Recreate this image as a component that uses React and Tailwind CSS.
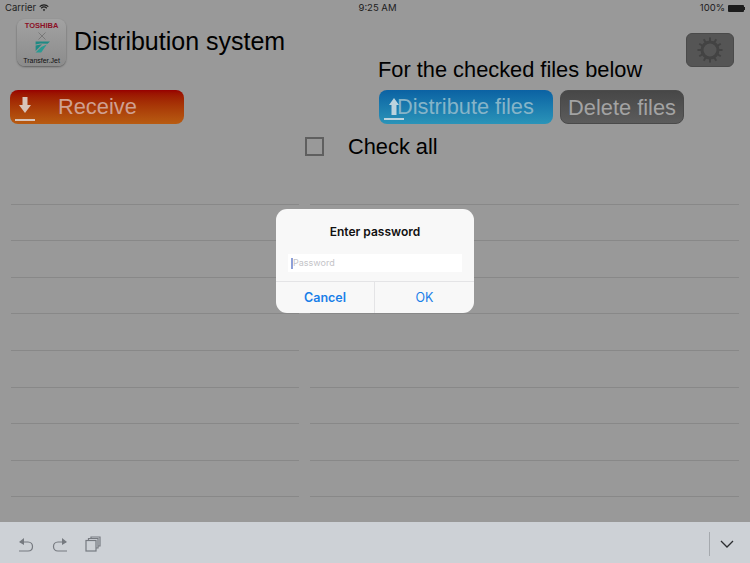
import React from 'react';

const sans = "font-['Liberation_Sans',Arial,sans-serif]";
const ui = "font-['Inter','Liberation_Sans',sans-serif]";
const rows = [0, 1, 2, 3, 4, 5, 6, 7, 8];
const rays = [0, 30, 60, 90, 120, 150, 180, 210, 240, 270, 300, 330];

const LogoMark = () => (
  <svg width="16" height="14" viewBox="0 0 20 14">
    <path d="M2 0 L20 0 L17 3 L8 2.5 L2 4 Z" fill="#1f8a84" />
    <path d="M2 5 L10 3.5 L5 9 L2 12 Z" fill="#1f8a84" />
    <path d="M9 7 L16 4 L9 14 L2 14 Z" fill="#2a9a92" />
  </svg>
);

const Gear = () => (
  <svg width="28" height="28" viewBox="0 0 28 28" fill="none" stroke="#434343">
    {rays.map(r => (
      <line key={r} x1="14" y1="1.5" x2="14" y2="6" strokeWidth="2" transform={`rotate(${r} 14 14)`} />
    ))}
    <circle cx="14" cy="14" r="8" strokeWidth="3" />
  </svg>
);

const App = () => {
  return (
    <div className={`w-[750px] h-[563px] overflow-hidden flex flex-col bg-[#999999] text-black ${sans}`}>
      <div className="relative h-[522px] shrink-0">
        {/* Status bar */}
        <div className={`h-[15px] pt-px px-[5px] flex items-center justify-between text-[9.5px] text-[#1c1c1c] ${ui}`}>
          <div className="flex items-center gap-[3px] w-[120px]">
            <span>Carrier</span>
            <svg width="10" height="8" viewBox="0 0 10 8" fill="none" stroke="#1c1c1c">
              <path d="M0.7 2.6 C3 0.3 7 0.3 9.3 2.6" strokeWidth="1.2" />
              <path d="M2.2 4.2 C3.8 2.8 6.2 2.8 7.8 4.2" strokeWidth="1.2" />
              <path d="M3.8 5.8 L5 7.2 L6.2 5.8 C5.5 5.2 4.5 5.2 3.8 5.8 Z" fill="#1c1c1c" stroke="none" />
            </svg>
          </div>
          <span className="ml-[5px]">9:25 AM</span>
          <div className="flex items-center justify-end gap-[3px] w-[120px]">
            <span>100%</span>
            <div className="flex items-center">
              <div className="w-[16px] h-[7px] bg-[#1c1c1c] rounded-[1px]" />
              <div className="w-px h-[3px] bg-[#1c1c1c]" />
            </div>
          </div>
        </div>

        {/* Header */}
        <div className="flex">
          <div className="w-[378px] pl-[10px]">
            <div className="flex pl-[7px] pt-[4px]">
              <div className="w-[49px] h-[47px] rounded-[8px] bg-gradient-to-b from-[#a2a2a2] to-[#8c8c8c] shadow-[0_1px_2px_rgba(0,0,0,0.4)] flex flex-col items-center pt-[3px]">
                <span className="text-[7.5px] leading-[8px] font-bold text-[#8c1026]">TOSHIBA</span>
                <svg width="8" height="8" viewBox="0 0 8 8" stroke="#6a6a6a" strokeWidth="0.7" className="mt-[2px]">
                  <path d="M0.5 0.5 L7.5 7.5 M7.5 0.5 L0.5 7.5" />
                </svg>
                <LogoMark />
                <span className="mt-[2px] text-[7px] leading-[9px] text-[#111111] whitespace-nowrap">Transfer.Jet</span>
              </div>
              <h1 className="ml-[8px] mt-[7px] text-[25px] leading-[30px] font-normal whitespace-nowrap">Distribution system</h1>
            </div>
            <button className="mt-[24px] w-[174px] h-[34px] rounded-[8px] bg-gradient-to-b from-[#980000] to-[#b85c12] flex items-center text-[#cfa092]">
              <svg width="20" height="28" viewBox="0 0 20 28" className="ml-[5px]" fill="#d8c4ba">
                <path d="M7.5 4 H12.5 V12 H16 L10 20 L4 12 H7.5 Z" />
                <rect x="0" y="26" width="20" height="2" />
              </svg>
              <span className="ml-[23px] text-[21.8px] leading-[30px]">Receive</span>
            </button>
          </div>

          <div className="flex-1 flex flex-col">
            <button className="self-end mr-[16px] mt-[18px] w-[48px] h-[34px] rounded-[6px] bg-[#555555] border border-[#4a4a4a] flex items-center justify-center">
              <Gear />
            </button>
            <p className="mt-[-10px] h-[33px] text-[21.8px] leading-[26px] whitespace-nowrap">For the checked files below</p>
            <div className="flex gap-[7px] pl-px">
              <button className="relative w-[174px] h-[34px] rounded-[8px] bg-gradient-to-b from-[#0b62a3] to-[#2b94b8] text-[#86b4c8] text-[21.8px] text-left pl-[18px] pt-px whitespace-nowrap">
                <svg width="20" height="26" viewBox="0 0 20 26" className="absolute left-[5px] top-[7px]" fill="#bcd4de">
                  <path d="M10 1 L15 8 H12.5 V18 H7.5 V8 H5 Z" />
                  <rect x="0" y="21" width="20" height="2" />
                </svg>
                Distribute files
              </button>
              <button className="w-[124px] h-[34px] rounded-[8px] bg-gradient-to-b from-[#474747] to-[#5c5c5c] border border-[#4a4a4a] text-[#a3a3a3] text-[21.8px] pt-px whitespace-nowrap">
                Delete files
              </button>
            </div>
          </div>
        </div>

        {/* Check all */}
        <div className="mt-[13px] ml-[305px] flex items-center h-[19px]">
          <div className="w-[19px] h-[19px] border-2 border-[#5f5f5f]" />
          <span className="ml-[24px] text-[21.8px] leading-[26px]">Check all</span>
        </div>

        {/* File list */}
        <div className="mt-[12px] ml-[11px] mr-[11px] grid grid-cols-[288px_1fr] gap-x-[11px]">
          {rows.map(r => (
            <React.Fragment key={r}>
              <div className="h-[36.6px] border-b border-[#888888]" />
              <div className="h-[36.6px] border-b border-[#888888]" />
            </React.Fragment>
          ))}
        </div>

        {/* Password alert */}
        <div className="absolute inset-0 flex items-center justify-center">
          <div className={`w-[198px] h-[104px] rounded-[11px] bg-[#f8f8f8] flex flex-col ${ui}`}>
            <div className="h-[45px] pt-[14px] text-center text-[12px] leading-[17px] font-semibold text-[#111111]">Enter password</div>
            <div className="h-[18px] mx-[12px] bg-white flex items-center">
              <div className="w-[2px] h-[11px] ml-[3px] bg-[#8ea0d8]" />
              <span className="text-[9px] text-[#c4c4c8]">Password</span>
            </div>
            <div className="mt-[9px] flex-1 flex border-t border-[#e4e4e6] text-[12.5px] text-[#1a7fe8]">
              <button className="w-[99px] pt-px font-semibold border-r border-[#e4e4e6]">Cancel</button>
              <button className="flex-1 pt-px">OK</button>
            </div>
          </div>
        </div>
      </div>

      {/* Keyboard shortcut bar */}
      <div className="flex-1 bg-[#cdd1d6] flex items-center pt-[2px] pl-[18px] pr-[16px]">
        <svg width="17" height="16" viewBox="0 0 17 16" fill="none" stroke="#767a80" strokeWidth="1.2">
          <path d="M1 15 H10 C16 15 16 6 10 6 H2" />
          <path d="M6 2 L1 6 L6 9" fill="#767a80" stroke="none" />
        </svg>
        <svg width="17" height="16" viewBox="0 0 17 16" fill="none" stroke="#767a80" strokeWidth="1.2" className="ml-[16px]">
          <path d="M16 15 H7 C1 15 1 6 7 6 H15" />
          <path d="M11 2 L16 6 L11 9" fill="#767a80" stroke="none" />
        </svg>
        <svg width="16" height="16" viewBox="0 0 16 16" fill="none" stroke="#767a80" strokeWidth="1.2" className="ml-[17px]">
          <rect x="1" y="4.5" width="10" height="10.5" />
          <path d="M3.5 4.5 V2.5 H13 V12 H11" />
          <path d="M6 2.5 V1 H15 V10 H13" />
        </svg>
        <div className="ml-auto w-px h-[24px] bg-[#a5a9ae]" />
        <svg width="14" height="8" viewBox="0 0 14 8" fill="none" stroke="#2b2d30" strokeWidth="1.3" className="ml-[10px]">
          <path d="M1 1 L7 7 L13 1" />
        </svg>
      </div>
    </div>
  );
};

export default App;
